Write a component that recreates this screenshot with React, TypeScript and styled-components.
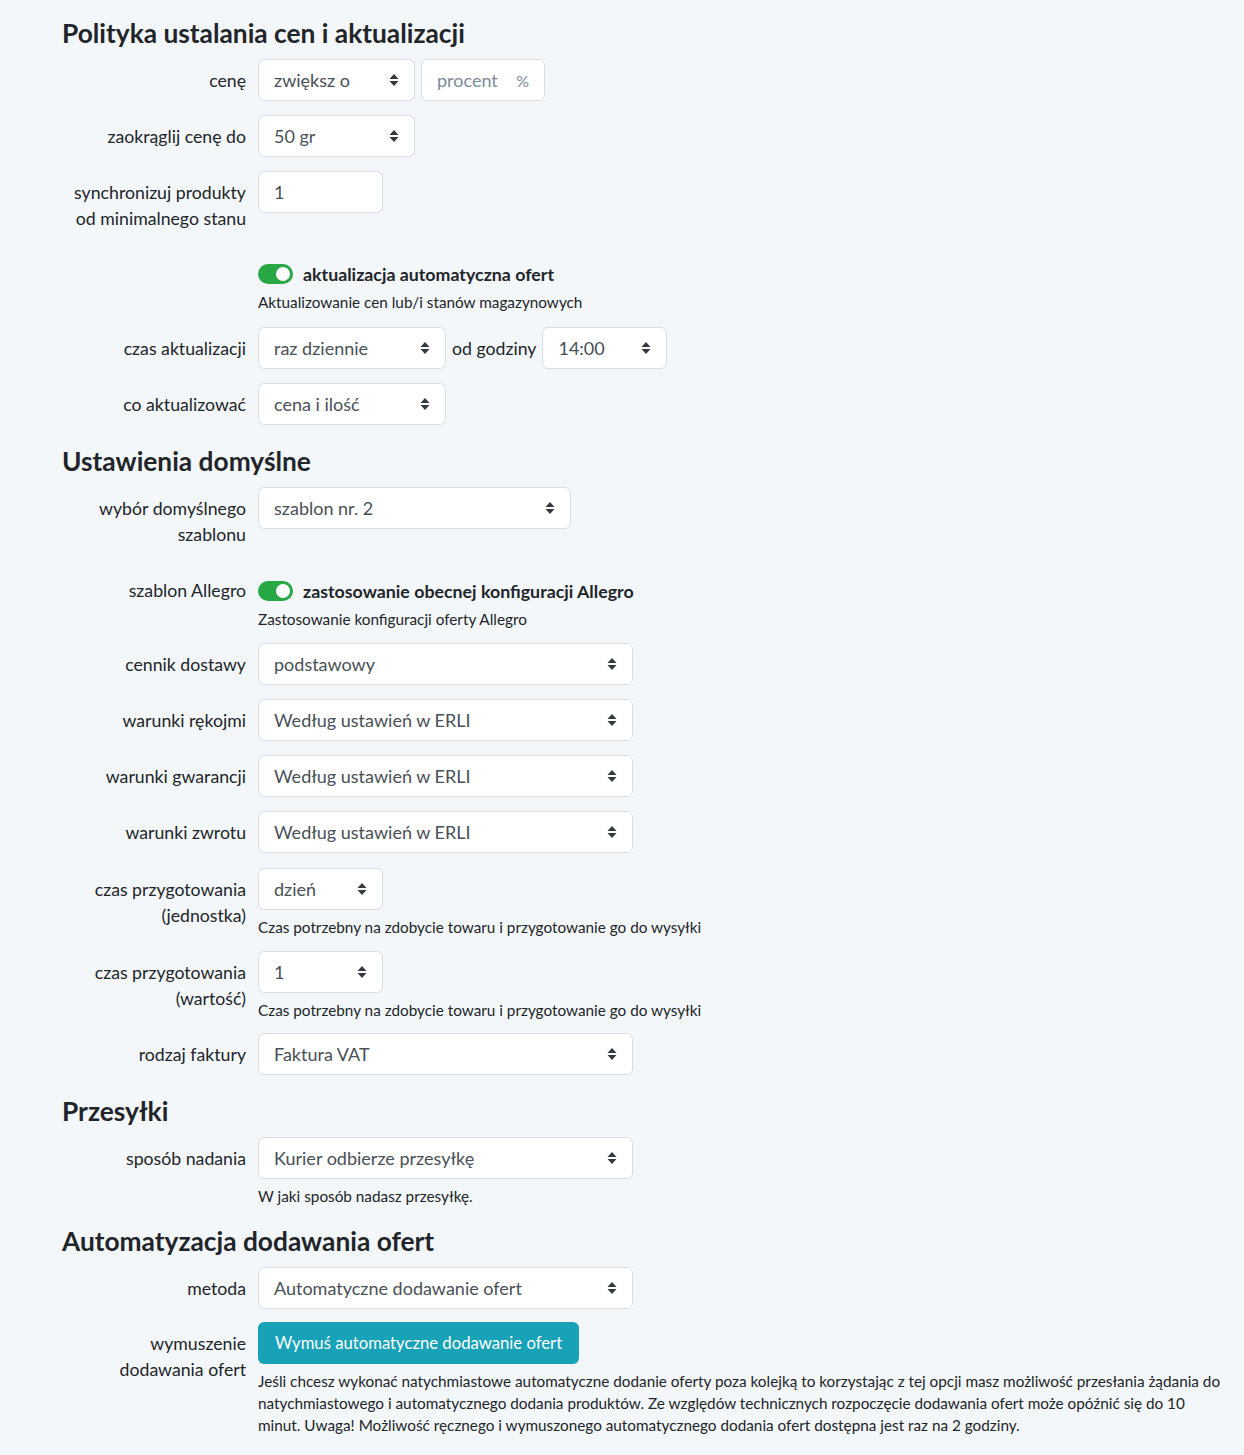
import { type FC, type ReactNode } from "react"
import styled, { createGlobalStyle } from "styled-components"

const GlobalStyle = createGlobalStyle`
  body {
    margin: 0;
    background: #f4f7fa;
    font-family: Lato, "Noto Sans", Arial, sans-serif;
    color: #212529;
  }
`

const Page = styled.div`
  padding: 19px 20px 20px 62px;
`

const Heading = styled.h2<{ $mt?: number }>`
  margin: ${p => p.$mt ?? 22}px 0 11px;
  font-size: 26.3px;
  line-height: 29px;
  font-weight: 700;
`

const Row = styled.div<{ $gap?: number }>`
  display: grid;
  grid-template-columns: 184px 1fr;
  column-gap: 12px;
  align-items: start;
  margin-top: ${p => p.$gap ?? 14}px;
`

const Label = styled.div`
  text-align: right;
  font-size: 17.7px;
  line-height: 26px;
  padding-top: 9px;
  white-space: nowrap;
`

const ToggleLabel = styled(Label)`
  padding-top: 0;
`

const Field = styled.div`
  display: flex;
  flex-direction: column;
  align-items: flex-start;
`

const Inline = styled.div`
  display: flex;
  align-items: center;
  gap: 6px;
`

const Box = styled.div<{ $w: number }>`
  box-sizing: border-box;
  width: ${p => p.$w}px;
  height: 42px;
  display: flex;
  align-items: center;
  justify-content: space-between;
  padding: 0 15px 0 15px;
  background: #fff;
  border: 1px solid #d9dee3;
  border-radius: 6px;
  font-size: 18px;
  color: #495057;
`

const Placeholder = styled.span`
  color: #7b8a9b;
`

const Suffix = styled.span`
  color: #7b8a9b;
  font-size: 16px;
`

const Help = styled.div<{ $mt?: number; $lh?: number }>`
  margin-top: ${p => p.$mt ?? 7}px;
  font-size: 15.3px;
  line-height: ${p => p.$lh ?? 21}px;
  color: #212529;
`

const InlineText = styled.span`
  font-size: 17.7px;
`

const SwitchLine = styled.div`
  display: flex;
  align-items: center;
  gap: 10px;
  height: 26px;
  font-weight: 700;
  font-size: 17.8px;
`

const Switch = styled.span`
  position: relative;
  flex: none;
  width: 35px;
  height: 20px;
  border-radius: 10px;
  background: #28a745;
  &::after {
    content: "";
    position: absolute;
    right: 3px;
    top: 3px;
    width: 14px;
    height: 14px;
    border-radius: 50%;
    background: #fff;
  }
`

const Button = styled.button`
  height: 42px;
  padding: 0 17px;
  border: none;
  border-radius: 6px;
  background: #17a2b8;
  color: #fff;
  font-family: inherit;
  font-size: 16.7px;
`

const Caret: FC = () => (
  <svg width="10" height="14" viewBox="0 0 10 14">
    <path d="M5 1 L9.5 6 H0.5 Z M5 13 L9.5 8 H0.5 Z" fill="#343a40" />
  </svg>
)

const Select: FC<{ w: number; children: ReactNode }> = ({ w, children }) => (
  <Box $w={w}>
    <span>{children}</span>
    <Caret />
  </Box>
)

const App: FC = () => (
  <Page>
    <GlobalStyle />
    <Heading $mt={0}>Polityka ustalania cen i aktualizacji</Heading>
    <Row $gap={0}>
      <Label>cenę</Label>
      <Inline>
        <Select w={157}>zwiększ o</Select>
        <Box $w={124}>
          <Placeholder>procent</Placeholder>
          <Suffix>%</Suffix>
        </Box>
      </Inline>
    </Row>
    <Row>
      <Label>zaokrąglij cenę do</Label>
      <Field>
        <Select w={157}>50 gr</Select>
      </Field>
    </Row>
    <Row>
      <Label>
        synchronizuj produkty
        <br />
        od minimalnego stanu
      </Label>
      <Field>
        <Box $w={125}>1</Box>
      </Field>
    </Row>
    <Row $gap={29}>
      <ToggleLabel />
      <Field>
        <SwitchLine>
          <Switch />
          aktualizacja automatyczna ofert
        </SwitchLine>
        <Help $mt={5}>Aktualizowanie cen lub/i stanów magazynowych</Help>
      </Field>
    </Row>
    <Row>
      <Label>czas aktualizacji</Label>
      <Inline>
        <Select w={188}>raz dziennie</Select>
        <InlineText>od godziny</InlineText>
        <Select w={125}>14:00</Select>
      </Inline>
    </Row>
    <Row>
      <Label>co aktualizować</Label>
      <Field>
        <Select w={188}>cena i ilość</Select>
      </Field>
    </Row>

    <Heading>Ustawienia domyślne</Heading>
    <Row $gap={0}>
      <Label>
        wybór domyślnego
        <br />
        szablonu
      </Label>
      <Field>
        <Select w={313}>szablon nr. 2</Select>
      </Field>
    </Row>
    <Row $gap={30}>
      <ToggleLabel>szablon Allegro</ToggleLabel>
      <Field>
        <SwitchLine>
          <Switch />
          zastosowanie obecnej konfiguracji Allegro
        </SwitchLine>
        <Help $mt={5}>Zastosowanie konfiguracji oferty Allegro</Help>
      </Field>
    </Row>
    <Row $gap={13}>
      <Label>cennik dostawy</Label>
      <Field>
        <Select w={375}>podstawowy</Select>
      </Field>
    </Row>
    <Row>
      <Label>warunki rękojmi</Label>
      <Field>
        <Select w={375}>Według ustawień w ERLI</Select>
      </Field>
    </Row>
    <Row>
      <Label>warunki gwarancji</Label>
      <Field>
        <Select w={375}>Według ustawień w ERLI</Select>
      </Field>
    </Row>
    <Row>
      <Label>warunki zwrotu</Label>
      <Field>
        <Select w={375}>Według ustawień w ERLI</Select>
      </Field>
    </Row>
    <Row $gap={15}>
      <Label>
        czas przygotowania
        <br />
        (jednostka)
      </Label>
      <Field>
        <Select w={125}>dzień</Select>
        <Help>Czas potrzebny na zdobycie towaru i przygotowanie go do wysyłki</Help>
      </Field>
    </Row>
    <Row $gap={13}>
      <Label>
        czas przygotowania
        <br />
        (wartość)
      </Label>
      <Field>
        <Select w={125}>1</Select>
        <Help>Czas potrzebny na zdobycie towaru i przygotowanie go do wysyłki</Help>
      </Field>
    </Row>
    <Row $gap={12}>
      <Label>rodzaj faktury</Label>
      <Field>
        <Select w={375}>Faktura VAT</Select>
      </Field>
    </Row>

    <Heading>Przesyłki</Heading>
    <Row $gap={0}>
      <Label>sposób nadania</Label>
      <Field>
        <Select w={375}>Kurier odbierze przesyłkę</Select>
        <Help>W jaki sposób nadasz przesyłkę.</Help>
      </Field>
    </Row>

    <Heading $mt={20}>Automatyzacja dodawania ofert</Heading>
    <Row $gap={0}>
      <Label>metoda</Label>
      <Field>
        <Select w={375}>Automatyczne dodawanie ofert</Select>
      </Field>
    </Row>
    <Row $gap={13}>
      <Label>
        wymuszenie
        <br />
        dodawania ofert
      </Label>
      <Field>
        <Button>Wymuś automatyczne dodawanie ofert</Button>
        <Help $mt={6} $lh={22}>
          Jeśli chcesz wykonać natychmiastowe automatyczne dodanie oferty poza kolejką to
          korzystając z tej opcji masz możliwość przesłania żądania do natychmiastowego i
          automatycznego dodania produktów. Ze względów technicznych rozpoczęcie dodawania ofert
          może opóźnić się do 10 minut. Uwaga! Możliwość ręcznego i wymuszonego automatycznego
          dodania ofert dostępna jest raz na 2 godziny.
        </Help>
      </Field>
    </Row>
  </Page>
)

export default App
